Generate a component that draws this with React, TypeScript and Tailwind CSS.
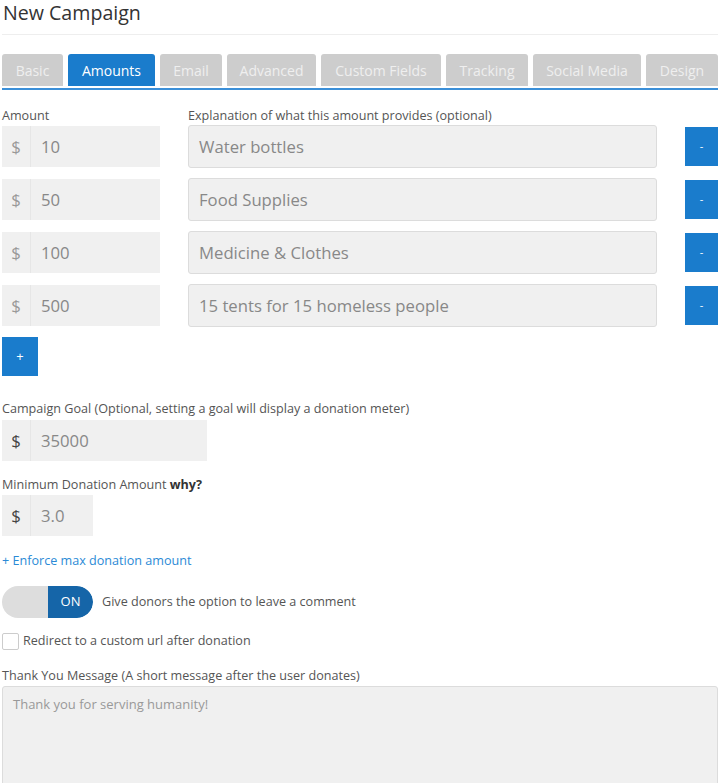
import { useState } from "react";

const tabs = [
  { name: "Basic", w: "w-[61px]" },
  { name: "Amounts", w: "w-[87px]" },
  { name: "Email", w: "w-[62px]" },
  { name: "Advanced", w: "w-[89px]" },
  { name: "Custom Fields", w: "w-[120px]" },
  { name: "Tracking", w: "w-[82px]" },
  { name: "Social Media", w: "w-[108px]" },
  { name: "Design", w: "w-[72px]" },
];

const amounts = [
  { value: "10", text: "Water bottles" },
  { value: "50", text: "Food Supplies" },
  { value: "100", text: "Medicine & Clothes" },
  { value: "500", text: "15 tents for 15 homeless people" },
];

function MoneyInput({ value, width, dark }: { value: string; width: string; dark?: boolean }) {
  return (
    <div className={`flex h-[41px] ${width} bg-[#f0f0f0]`}>
      <span
        className={`flex w-[29px] items-center justify-center border-r border-[#e6e6e6] text-[16.7px] ${
          dark ? "text-[#444]" : "text-[#999]"
        }`}
      >
        $
      </span>
      <span className="flex flex-1 items-center pl-[10px] text-[16.7px] text-[#888]">{value}</span>
    </div>
  );
}

export default function App() {
  const [on, setOn] = useState(true);
  const [redirect, setRedirect] = useState(false);

  return (
    <div className="min-h-[783px] overflow-hidden bg-white px-[2px] font-['Open_Sans',sans-serif] text-[12.6px] text-[#555]">
      <div className="h-[35px] border-b border-[#eeeeee] pl-[1px]">
        <h1 className="pt-[1px] text-[19.6px] leading-[24px] text-[#333]">New Campaign</h1>
      </div>

      <div className="mt-[19px] flex gap-[5px] border-b-2 border-[#3b8fd8] pb-[2px]">
        {tabs.map((t) => (
          <div
            key={t.name}
            className={`flex h-[32px] ${t.w} items-center justify-center rounded-t-[3px] text-[14px] ${
              t.name === "Amounts" ? "bg-[#1a7ccc] text-white" : "bg-[#cdcdcd] text-[#efefef]"
            }`}
          >
            {t.name}
          </div>
        ))}
      </div>

      <div className="mt-[17px] flex leading-[18px]">
        <span className="w-[186px]">Amount</span>
        <span>Explanation of what this amount provides (optional)</span>
      </div>

      <div className="flex flex-col gap-[10px]">
        {amounts.map((a) => (
          <div key={a.value} className="flex h-[43px] items-center">
            <MoneyInput value={a.value} width="w-[158px]" />
            <div className="ml-[28px] flex h-[43px] w-[469px] items-center rounded-[3px] border border-[#dcdcdc] bg-[#f0f0f0] pl-[10px] text-[16.7px] text-[#888]">
              {a.text}
            </div>
            <button className="ml-[28px] flex h-[39px] w-[33px] items-center justify-center bg-[#1a7ccc] text-[11px] text-white">
              -
            </button>
          </div>
        ))}
      </div>

      <button className="mt-[10px] flex h-[39px] w-[36px] items-center justify-center bg-[#1a7ccc] text-[13px] text-white">
        +
      </button>

      <div className="mt-[24px] leading-[18px]">
        Campaign Goal (Optional, setting a goal will display a donation meter)
      </div>
      <div className="mt-[2px]">
        <MoneyInput value="35000" width="w-[205px]" dark />
      </div>

      <div className="mt-[15px] leading-[18px]">
        Minimum Donation Amount <b className="font-bold text-[#333]">why?</b>
      </div>
      <div className="mt-[1px]">
        <MoneyInput value="3.0" width="w-[91px]" dark />
      </div>

      <div className="mt-[16px] leading-[18px] text-[#2b8ad6]">+ Enforce max donation amount</div>

      <div className="mt-[16px] flex items-center gap-[9px]">
        <button onClick={() => setOn(!on)} className="flex h-[32px] w-[91px] overflow-hidden rounded-full">
          <span className="w-[46px] bg-[#dddddd]" />
          <span className="flex flex-1 items-center justify-center rounded-r-full bg-[#1565a8] text-[13px] text-white">
            {on ? "ON" : "OFF"}
          </span>
        </button>
        <span>Give donors the option to leave a comment</span>
      </div>

      <label className="mt-[14px] flex items-center gap-[4px] leading-[18px]">
        <input
          type="checkbox"
          checked={redirect}
          onChange={() => setRedirect(!redirect)}
          className="h-[17px] w-[17px] appearance-none rounded-[2px] border border-[#cccccc] bg-white"
        />
        <span>Redirect to a custom url after donation</span>
      </label>

      <div className="mt-[17px] leading-[18px]">Thank You Message (A short message after the user donates)</div>
      <textarea
        className="mt-[1px] block h-[110px] w-full resize-none rounded-[3px] border border-[#dcdcdc] bg-[#f0f0f0] px-[10px] py-[8px] text-[13px] text-[#888] outline-none placeholder:text-[#999]"
        placeholder="Thank you for serving humanity!"
      />
    </div>
  );
}
